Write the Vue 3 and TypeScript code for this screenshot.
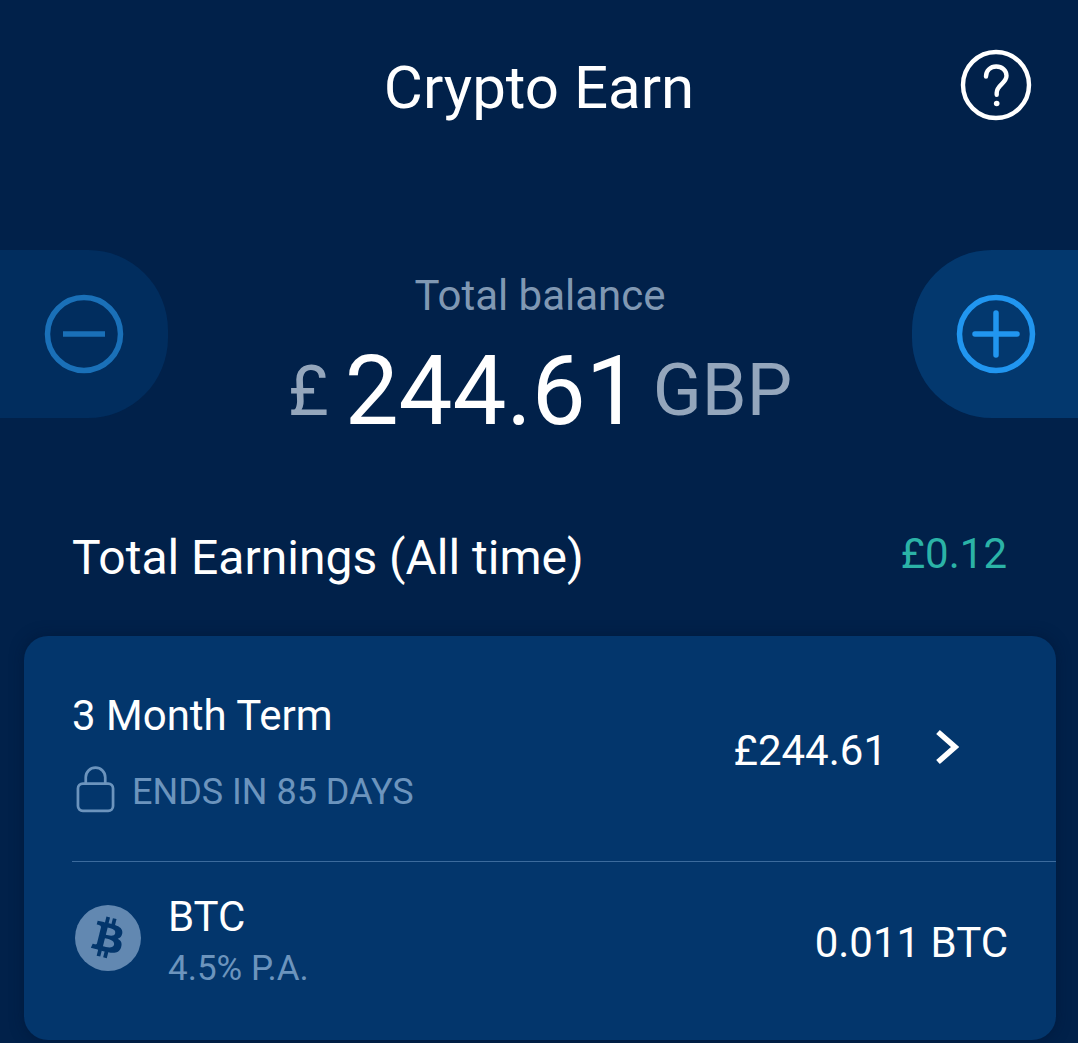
<script setup lang="ts">
const btcBody =
  'M17.204 10.282c.24-1.59-.974-2.45-2.64-3.02l.54-2.15-1.32-.33-.52 2.1c-.35-.09-.7-.17-1.05-.25l.53-2.12-1.31-.33-.54 2.15c-.29-.06-.57-.13-.84-.2l-1.81-.45-.35 1.4s.97.22.95.24c.53.13.63.48.61.76l-.61 2.46c.04.01.08.02.14.05l-.14-.04-.86 3.45c-.07.16-.23.4-.6.31.01.02-.96-.24-.96-.24l-.65 1.51 1.7.43c.32.08.63.16.94.24l-.54 2.19 1.31.33.54-2.16c.36.1.71.19 1.05.27l-.54 2.15 1.32.33.54-2.18c2.24.43 3.93.25 4.64-1.77.57-1.63-.03-2.57-1.21-3.18.86-.2 1.5-.76 1.68-1.93zm-3 4.21c-.41 1.63-3.15.75-4.04.53l.72-2.9c.89.22 3.74.66 3.32 2.37zm.41-4.24c-.37 1.49-2.65.73-3.39.55l.65-2.63c.74.18 3.13.53 2.74 2.08z'
</script>

<template>
  <div class="page">
    <header class="header">
      <h1 class="title">Crypto Earn</h1>
      <svg class="help" viewBox="0 0 72 72" fill="none" stroke="#fff" stroke-width="4.400" stroke-linecap="round">
        <circle cx="36" cy="36" r="33" />
        <path d="M26 27.500c0-6 4.500-10 10.200-10 5.800 0 10.300 4 10.300 9.300 0 7.600-9.800 9-9.800 17v2" />
        <circle cx="36.700" cy="54.500" r="2.800" fill="#fff" stroke="none" />
      </svg>
    </header>

    <section class="hero">
      <button class="side side-left">
        <svg class="side-icon" viewBox="0 0 80 80" fill="none" stroke="#1a70b8" stroke-width="5.500">
          <circle cx="40" cy="40" r="36.500" />
          <path d="M19 40h42" />
        </svg>
      </button>
      <div class="balance">
        <div class="balance-label">Total balance</div>
        <div class="balance-value">
          <span class="currency">£</span>
          <span class="amount">244.61</span>
          <span class="code">GBP</span>
        </div>
      </div>
      <button class="side side-right">
        <svg class="side-icon" viewBox="0 0 80 80" fill="none" stroke="#2196f0" stroke-width="5.500" stroke-linecap="round">
          <circle cx="40" cy="40" r="36.500" />
          <path d="M19 40h42M40 19v42" />
        </svg>
      </button>
    </section>

    <section class="earnings">
      <span class="earnings-label">Total Earnings (All time)</span>
      <span class="earnings-value">£0.12</span>
    </section>

    <section class="card">
      <div class="term">
        <div class="term-info">
          <div class="term-name">3 Month Term</div>
          <div class="term-ends">
            <svg class="lock" viewBox="0 0 40 48" fill="none" stroke="#6c94bd" stroke-width="2.800">
              <rect x="2" y="18" width="36" height="28" rx="5" />
              <path d="M10 18v-6.500a10 10 0 0 1 20 0V18" />
            </svg>
            <span>ENDS IN 85 DAYS</span>
          </div>
        </div>
        <span class="term-amount">£244.61</span>
        <svg class="chevron" viewBox="0 0 24 36" fill="none" stroke="#fff" stroke-width="5.500">
          <path d="M3 3l17 15L3 33" />
        </svg>
      </div>
      <div class="asset">
        <svg class="coin" viewBox="0 0 24 24">
          <circle cx="12" cy="12" r="12" fill="#6288b1" />
          <path :d="btcBody" fill="#03366c" />
        </svg>
        <div class="asset-info">
          <div class="asset-name">BTC</div>
          <div class="asset-rate">4.5% P.A.</div>
        </div>
        <span class="asset-amount">0.011 BTC</span>
      </div>
    </section>
  </div>
</template>

<style scoped>
.page {
  height: 1043px;
  overflow: hidden;
  background: #01214a;
  color: #fff;
  font-family: Roboto, "Liberation Sans", sans-serif;
}

.header {
  height: 176px;
  display: flex;
  align-items: center;
  justify-content: center;
  position: relative;
}

.title {
  margin: 0;
  font-size: 60px;
  font-weight: 400;
  line-height: 1;
}

.help {
  position: absolute;
  left: 960px;
  top: 49px;
  width: 72px;
  height: 72px;
}

.hero {
  margin-top: 74px;
  height: 168px;
  display: grid;
  grid-template-columns: 168px 1fr 166px;
  grid-template-rows: 168px;
}

.side {
  border: none;
  padding: 0;
  display: flex;
  align-items: center;
}

.side-left {
  background: #012d5e;
  border-radius: 0 80px 80px 0;
  justify-content: flex-end;
  padding-right: 44px;
}

.side-right {
  background: #03386e;
  border-radius: 80px 0 0 80px;
  justify-content: flex-start;
  padding-left: 44px;
}

.side-icon {
  width: 80px;
  height: 80px;
}

.balance {
  text-align: center;
}

.balance-label {
  margin-top: 22px;
  font-size: 42px;
  line-height: 48px;
  color: #8098b3;
}

.balance-value {
  margin-top: 23px;
  display: flex;
  align-items: center;
  justify-content: center;
  gap: 16px;
  line-height: 96px;
}

.currency {
  font-size: 70px;
  color: #94a6bc;
}

.amount {
  font-size: 96px;
}

.code {
  font-size: 72px;
  color: #94a6bc;
  margin-left: -3px;
}

.earnings {
  margin-top: 109px;
  padding: 0 71px 0 72px;
  display: flex;
  align-items: center;
  justify-content: space-between;
  height: 60px;
}

.earnings-label {
  font-size: 48px;
}

.earnings-value {
  font-size: 42px;
  color: #2bb3a7;
  margin-bottom: 8px;
}

.card {
  margin: 49px 22px 0 24px;
  height: 404px;
  background: #03366c;
  border-radius: 24px;
  padding-left: 48px;
  box-shadow: 0 0 14px rgba(0, 20, 50, 0.5);
}

.term {
  height: 225px;
  display: flex;
  align-items: center;
  padding-right: 48px;
  border-bottom: 1px solid #3c6b9d;
}

.term-info {
  flex: 1;
  padding-top: 8px;
}

.term-name {
  font-size: 42px;
  line-height: 48px;
}

.term-ends {
  margin-top: 31px;
  display: flex;
  align-items: center;
  gap: 17px;
  font-size: 36px;
  color: #6c94bd;
  padding-left: 4px;
}

.lock {
  width: 39px;
  height: 47px;
  margin-top: -6px;
}

.term-amount {
  font-size: 42px;
  margin-top: 4px;
  margin-right: 48px;
}

.chevron {
  width: 24px;
  height: 36px;
  margin-right: 49px;
  margin-bottom: 4px;
}

.asset {
  height: 160px;
  display: flex;
  align-items: center;
  padding-right: 48px;
}

.coin {
  width: 66px;
  height: 66px;
  margin-left: 3px;
  margin-top: -8px;
}

.asset-info {
  flex: 1;
  margin-left: 27px;
}

.asset-name {
  font-size: 42px;
  line-height: 48px;
}

.asset-rate {
  margin-top: 6px;
  font-size: 35px;
  line-height: 44px;
  color: #6c94bd;
}

.asset-amount {
  font-size: 42px;
}
</style>

<style>
html,
body {
  background: #01214a;
}
</style>
